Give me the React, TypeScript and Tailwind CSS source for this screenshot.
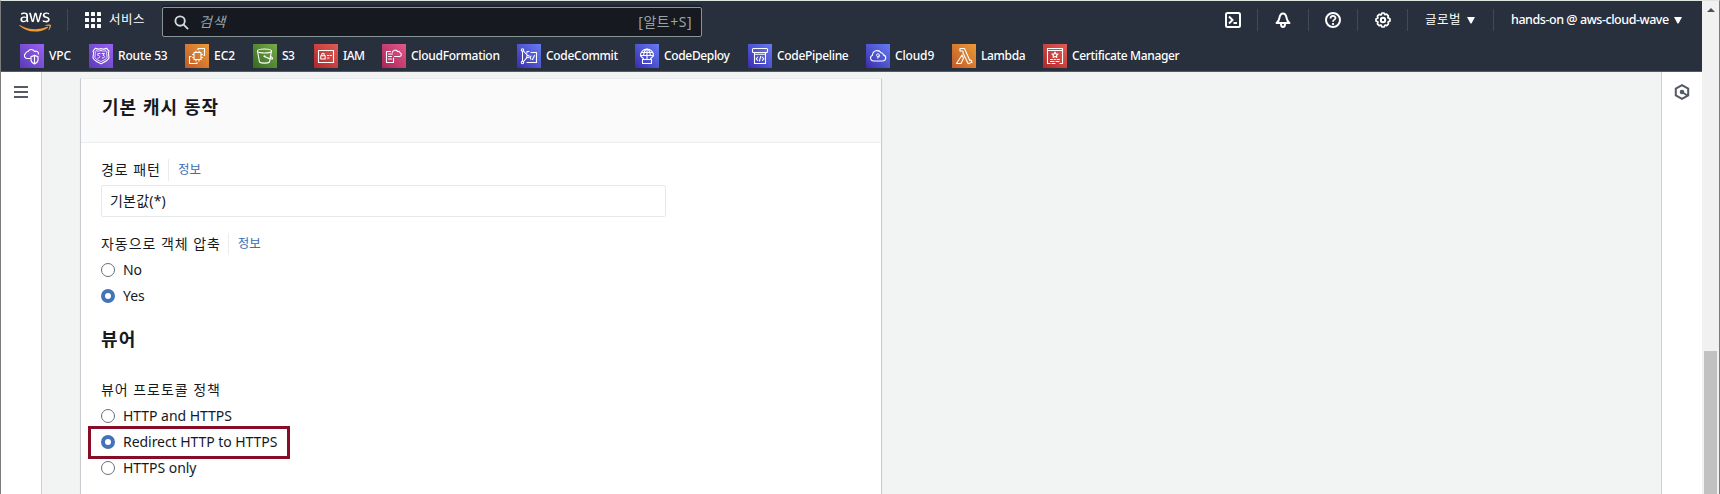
import type { ReactNode } from "react";
import { FaAws } from "react-icons/fa";

const Svg = ({ children }: { children: ReactNode }) => (
  <svg viewBox="0 0 24 24" className="block size-6" fill="none" stroke="#fff" strokeWidth="1.1" strokeLinejoin="round" strokeLinecap="round">
    {children}
  </svg>
);

const purple = "bg-linear-to-tr from-[#5a3ab8] to-[#9a62f2]";
const blue = "bg-linear-to-tr from-[#3b2bac] to-[#667cf4]";
const orange = "bg-linear-to-tr from-[#c2592a] to-[#e89b36]";
const green = "bg-linear-to-tr from-[#35691f] to-[#7aab4c]";
const red = "bg-linear-to-tr from-[#b0262a] to-[#e25c55]";
const pink = "bg-linear-to-tr from-[#ab2458] to-[#e2588a]";

const services: { name: string; bg: string; width: string; track: string; icon: ReactNode }[] = [
  {
    name: "VPC", bg: purple, width: "w-[69px]", track: "tracking-[-0.1px]",
    icon: <><path d="M10.500 14.500H7.500A2.800 2.800 0 0 1 5.500 9.500 3 3 0 0 1 8 7.500 3.600 3.600 0 0 1 14.500 7.500 2.700 2.700 0 0 1 18.500 10" /><path d="M11 12.500c1.500 0 2.500-.5 3.500-1.200 1 .7 2 1.200 3.500 1.200V16c0 1.800-1.500 3-3.500 4-2-1-3.500-2.200-3.500-4zM14.500 11.500V20" /></>,
  },
  {
    name: "Route 53", bg: purple, width: "w-[96px]", track: "tracking-[-0.15px]",
    icon: <><path d="M12 4.500c2 1 3.500.8 5.500-.3l2.500 3c-1.500 2 0 4 0 6 0 3-4 4.500-8 6.500-4-2-8-3.500-8-6.500 0-2 1.500-4 0-6l2.500-3c2 1.100 3.500 1.300 5.500.3z" /><path d="M12 6.500c1.700.8 3.500.8 5 .2l1 1.100c-1 2 .3 4 .1 5.400-.2 2-3.500 3-6.100 4.300-2.600-1.300-5.900-2.300-6.100-4.300-.2-1.400 1.100-3.400.1-5.400l1-1.100c1.500.6 3.300.6 5-.2z" strokeWidth=".8" /><path d="M11 9.500H8.800v2c2.600-.5 2.800 3 0 2.600M13 9.500h2.500L14 11.300c2.500.2 2 3.200-.8 2.700" strokeWidth=".9" /></>,
  },
  {
    name: "EC2", bg: orange, width: "w-[68px]", track: "tracking-normal",
    icon: <><path d="M9 8.500h7v7H9zM11 8.500V7M14 8.500V7M11 17v-1.500M14 17v-1.500M7.500 10.500H9M7.500 13.500H9M16 10.500h1.500M16 13.500h1.500" /><path d="M13 5.500v-1h6.500v7H19M6 12.500H4.500v7H12V18.500" /></>,
  },
  {
    name: "S3", bg: green, width: "w-[61px]", track: "tracking-[-0.5px]",
    icon: <><ellipse cx="11.500" cy="7" rx="7" ry="2" /><path d="M4.500 7 6.500 18c1.500 1.500 8.500 1.500 10 0l2-11M11.500 12.500c4 2 7 3 8 2.200.5-.7-1-1.700-2.300-2.500" /><circle cx="11.500" cy="12.300" r=".5" /></>,
  },
  {
    name: "IAM", bg: red, width: "w-[68px]", track: "tracking-[-0.5px]",
    icon: <><path d="M4.500 6.500h15v12h-15zM6.800 11.800h4.400V15H6.800zM7.800 11.800v-1.300a1.200 1.200 0 0 1 2.400 0v1.300M13.500 11.500h1M16 11.500h1.500M13.500 14H15" /></>,
  },
  {
    name: "CloudFormation", bg: pink, width: "w-[135px]", track: "tracking-[-0.3px]",
    icon: <><path d="M11.500 14V18.500H4.500V7.500h4M6.500 10h4M6.500 12.500h3M6.500 15h3" /><path d="M12.500 12.500h5.200a1.900 1.900 0 0 0 .3-3.700 1.600 1.600 0 0 0-2.300-1.200 3 3 0 0 0-5.400.6" /></>,
  },
  {
    name: "CodeCommit", bg: blue, width: "w-[118px]", track: "tracking-[-0.3px]",
    icon: <><circle cx="5.500" cy="6" r="1.200" /><circle cx="5.500" cy="18.500" r="1.200" /><circle cx="11" cy="12.500" r="1.200" /><path d="M5.500 7.200v10M6.500 7l4 4.500M6.500 17.500l3.600-4.200M10 9V7.500h2M14 8.500h5.500v10H10M14 12l-1 1.700 1 1.600M17.500 11.500l-2 4" /></>,
  },
  {
    name: "CodeDeploy", bg: blue, width: "w-[113px]", track: "tracking-[-0.35px]",
    icon: <><path d="M5.500 11.500a6.500 6.500 0 0 1 13 0zM12 4.800v6.700M12 4.800c-2.500 1.500-3.300 4-3.300 6.700M12 4.800c2.500 1.500 3.300 4 3.300 6.700M6.500 8.500h11M5.500 11.500c.5 1.500 2.500 2 3 3.500M18.500 11.500c-.5 1.500-2.500 2-3 3.500M7.500 15.500h9v4h-9zM12 12v3" /></>,
  },
  {
    name: "CodePipeline", bg: blue, width: "w-[118px]", track: "tracking-[-0.3px]",
    icon: <><path d="M5.500 4.500h13a1 1 0 0 1 1 1v2a1 1 0 0 1-1 1h-13a1 1 0 0 1-1-1v-2a1 1 0 0 1 1-1zM6.500 8.500v11h11v-11M7 10.200h10" /><path d="m9.700 13-1.500 1.800 1.500 1.700M14.300 13l1.500 1.800-1.500 1.700M12.700 12.500l-1.300 4.500" /></>,
  },
  {
    name: "Cloud9", bg: blue, width: "w-[86px]", track: "tracking-[-0.15px]",
    icon: <><path d="M7.500 17A3 3 0 0 1 6.500 11.200 4.600 4.600 0 0 1 15 8.800a2 2 0 0 1 2.300 2.100A3.100 3.100 0 0 1 17 17z" /><path d="M13.300 11a1.400 1.400 0 1 1-1.400-1.200c1 0 1.500.8 1.400 2 0 1.500-.8 2.500-2 2.200" strokeWidth=".9" /></>,
  },
  {
    name: "Lambda", bg: orange, width: "w-[91px]", track: "tracking-[-0.35px]",
    icon: <path d="M8 4.500h4.500l5.300 12 1.200-.5 1 2.300-3.800 1.400L11 9l.2-.3L10.700 7H8zM10 11l1.500 3.200-2.500 5.300H4.500z" />,
  },
  {
    name: "Certificate Manager", bg: red, width: "w-[140px]", track: "tracking-[-0.35px]",
    icon: <><path d="M7 19.500H4.500v-15h15v15H17M4.500 6.500h15M7.500 15.500h2M11 15.500h1.500M14 15.500h2.500M7.500 17.500H11M13 17.500h3M9 19.500h3" /><path d="m12 8 .9 1.900 2.100.2-1.500 1.400.4 2-1.900-1-1.900 1 .4-2L9 10.100l2.100-.2z" /></>,
  },
];

const Divider = ({ className = "" }: { className?: string }) => <div className={`h-[22px] w-px shrink-0 bg-[#424a57] ${className}`} />;

const Caret = ({ className = "" }: { className?: string }) => (
  <svg viewBox="0 0 8 7" className={`h-[7px] w-2 shrink-0 ${className}`}><path d="M0 0h8L4.500 6.500h-1z" fill="#fff" /></svg>
);

function TopBar() {
  return (
    <div className="flex h-[38px] items-center pl-[18px] text-white">
      <svg className="h-0 w-0" aria-hidden="true">
        <defs>
          <linearGradient id="aws-fill" x1="0" y1="0" x2="0" y2="1">
            <stop offset="0.620" stopColor="#fff" />
            <stop offset="0.620" stopColor="#f29b33" />
          </linearGradient>
        </defs>
      </svg>
      <FaAws className="mt-[3px] h-[26px] w-[32px] shrink-0 fill-[url(#aws-fill)]" />
      <Divider className="ml-4" />
      <svg viewBox="0 0 16 16" className="ml-[17px] size-4 shrink-0" fill="#fff">
        {[0, 6, 12].map((y) => [0, 6, 12].map((x) => <rect key={`${x}-${y}`} x={x} y={y} width="4" height="4" rx=".6" />))}
      </svg>
      <span className="ml-2 w-[53px] text-[12.500px] font-normal whitespace-nowrap tracking-[0.5px]">서비스</span>
      <div className="mt-[4px] flex h-[30px] w-[540px] shrink-0 items-center rounded-[2px] border border-[#879596] bg-[#16191f] pr-[9px] pl-[11px] text-[#95a5a6] shadow-[0_-2px_0_0_#1d222c]">
        <svg viewBox="0 0 16 16" className="size-[15px]" fill="none" stroke="#d5dbdb" strokeWidth="2"><circle cx="6.500" cy="6.500" r="5" /><path d="m10 10 5 5" /></svg>
        <span className="-mt-[2px] ml-[10px] flex-1 text-[14px] tracking-[0.500px] italic">검색</span>
        <span className="-mt-[2px] text-[14px] tracking-[0.500px]">[알트+S]</span>
      </div>
      <div className="flex flex-1 items-center pl-[523px]">
        <svg viewBox="0 0 16 16" className="size-4 shrink-0" fill="none" stroke="#fff" strokeWidth="2"><rect x="1" y="1" width="14" height="14" rx="1.500" /><path d="m4 4.500 3.500 3.500L4 11.500M8.500 11H12" /></svg>
        <Divider className="ml-4" />
        <svg viewBox="0 0 16 16" className="ml-[17px] size-4 shrink-0" fill="none" stroke="#fff" strokeWidth="2" strokeLinejoin="round"><path d="M1.500 11h13c-2.500-1.500-2.500-3-3-5.500C11 3 10 1.500 8 1.500S5 3 4.500 5.500c-.5 2.500-.5 4-3 5.500zM6 12c0 4 4 4 4 0" /></svg>
        <Divider className="ml-[17px]" />
        <svg viewBox="0 0 16 16" className="ml-4 size-4 shrink-0" fill="none" stroke="#fff" strokeWidth="2"><circle cx="8" cy="8" r="7" /><path d="M5.500 6.500C5.500 3 10.500 3.300 10.500 6 10.500 7.800 8 7.500 8 9.800M8 11v2" strokeWidth="1.800" /></svg>
        <Divider className="ml-4" />
        <svg viewBox="0 0 16 16" className="ml-[17px] size-4 shrink-0" fill="none" stroke="#fff" strokeWidth="2" strokeLinejoin="round"><path d="M7 1h2l.8 1.600 1.800-.5 1.800 1.800-.6 1.600L15 7v2l-2 1 .5 1.800-1.800 1.800-1.700-.5L9 15H7l-1-2-1.800.6-1.800-1.800.6-1.800L1 9V7l1.900-1-.5-1.900 1.800-1.800L6 3z" strokeWidth="1.700" /><circle cx="8" cy="8" r="2.200" /></svg>
        <Divider className="ml-4" />
        <span className="ml-[17px] w-[42px] shrink-0 text-[12.500px] font-normal whitespace-nowrap tracking-[0.5px]">글로벌</span>
        <Caret />
        <Divider className="ml-[18px]" />
        <span className="ml-[17px] w-[163px] shrink-0 text-[12.500px] font-medium whitespace-nowrap tracking-[-0.450px]">hands-on @ aws-cloud-wave</span>
        <Caret />
      </div>
    </div>
  );
}

function Favorites() {
  return (
    <div className="flex h-[32px] items-center pt-[2px] pl-[19px] text-white">
      {services.map((s) => (
        <div key={s.name} className={`flex shrink-0 items-center gap-[5px] ${s.width}`}>
          <div className={`size-6 shrink-0 ${s.bg}`}><Svg>{s.icon}</Svg></div>
          <span className={`text-[12px] font-medium whitespace-nowrap ${s.track}`}>{s.name}</span>
        </div>
      ))}
    </div>
  );
}

function Radio({ label, checked = false }: { label: string; checked?: boolean }) {
  return (
    <div className="flex h-[26px] items-center gap-2">
      <span className={`size-[14px] shrink-0 rounded-full ${checked ? "border-4 border-[#4374b9] bg-white" : "border border-[#687078] bg-white"}`} />
      <span className="pb-px text-[14px] whitespace-nowrap tracking-[-0.050px]">{label}</span>
    </div>
  );
}

function FieldLabel({ text, info = false }: { text: string; info?: boolean }) {
  return (
    <div className="flex h-[22px] items-center whitespace-nowrap">
      <span className="pb-[2px] text-[14px] tracking-[0.950px]">{text}</span>
      {info && <span className="ml-[7px] flex h-[22px] items-center border-l border-[#eaeded] pl-[9px] text-[12.500px] text-[#3b6cb4]">정보</span>}
    </div>
  );
}

export default function App() {
  return (
    <div className="flex h-[494px] w-[1720px] overflow-hidden border-x border-t border-x-[#7b7b7b] border-t-[#dfe5e1] bg-[#f2f3f3] font-['Noto_Sans','Noto_Sans_CJK_KR',sans-serif] text-[#16191f]">
      <div className="flex w-[1701px] shrink-0 flex-col">
        <header className="h-[71px] shrink-0 border-b border-[#545b64] bg-[#282f3d]">
          <TopBar />
          <Favorites />
        </header>
        <div className="flex min-h-0 flex-1">
          <nav className="w-[41px] shrink-0 border-r border-[#ccd0d3] bg-white pt-[14px] pl-[13px]">
            <svg viewBox="0 0 14 12" className="h-3 w-[14px]" fill="#545b64"><path d="M0 0h14v2H0zM0 5h14v2H0zM0 10h14v2H0z" /></svg>
          </nav>
          <main className="flex-1 pt-[6px] pl-[38px]">
            <section className="h-[430px] w-[802px] border-x border-t border-x-[#c9cdd1] border-t-[#eaeded] bg-white shadow-[0_1px_1px_0_rgba(0,28,36,0.1)]">
              <div className="flex h-[64px] items-center border-b border-[#eaeded] bg-[#fafafa] pb-[6px] pl-[21px]">
                <h2 className="text-[18px] font-bold tracking-[1.050px]">기본 캐시 동작</h2>
              </div>
              <div className="flex flex-col items-start pt-4 pl-5">
                <FieldLabel text="경로 패턴" info />
                <div className="mt-[4px] flex h-8 w-[565px] items-center rounded-[2px] border border-[#e6e9e9] pb-px pl-[8px] text-[14px] tracking-[0.200px]">기본값(*)</div>
                <div className="mt-4"><FieldLabel text="자동으로 객체 압축" info /></div>
                <div className="mt-[2px]">
                  <Radio label="No" />
                  <Radio label="Yes" checked />
                </div>
                <h3 className="mt-[17px] h-[26px] text-[18px] leading-[26px] font-bold tracking-[1.100px]">뷰어</h3>
                <div className="mt-[27px]"><FieldLabel text="뷰어 프로토콜 정책" /></div>
                <div className="mt-[2px]">
                  <Radio label="HTTP and HTTPS" />
                  <div className="relative">
                    <Radio label="Redirect HTTP to HTTPS" checked />
                    <div className="absolute -top-[3px] -left-[13px] h-[33px] w-[202px] border-[3px] border-[#860c28]" />
                  </div>
                  <Radio label="HTTPS only" />
                </div>
              </div>
            </section>
          </main>
          <aside className="w-[41px] shrink-0 border-l border-[#ccd0d3] bg-white pt-[12px] pl-[12px]">
            <svg viewBox="0 0 16 16" className="size-4" fill="none" stroke="#545b64" strokeWidth="2"><path d="M8 1.200 14.200 4.600v6.800L8 14.800l-6.200-3.400V4.600zM8.500 8.500l5 3" /><circle cx="8" cy="8" r="1.300" fill="#545b64" /></svg>
          </aside>
        </div>
      </div>
      <div className="flex w-[17px] shrink-0 flex-col items-center bg-[#f1f1f1] pt-[7px]">
        <svg viewBox="0 0 8 4" className="h-1 w-2" fill="#505050"><path d="M0 4h8L4 0z" /></svg>
        <div className="mt-[339px] w-[13px] flex-1 bg-[#c1c1c1]" />
      </div>
    </div>
  );
}
